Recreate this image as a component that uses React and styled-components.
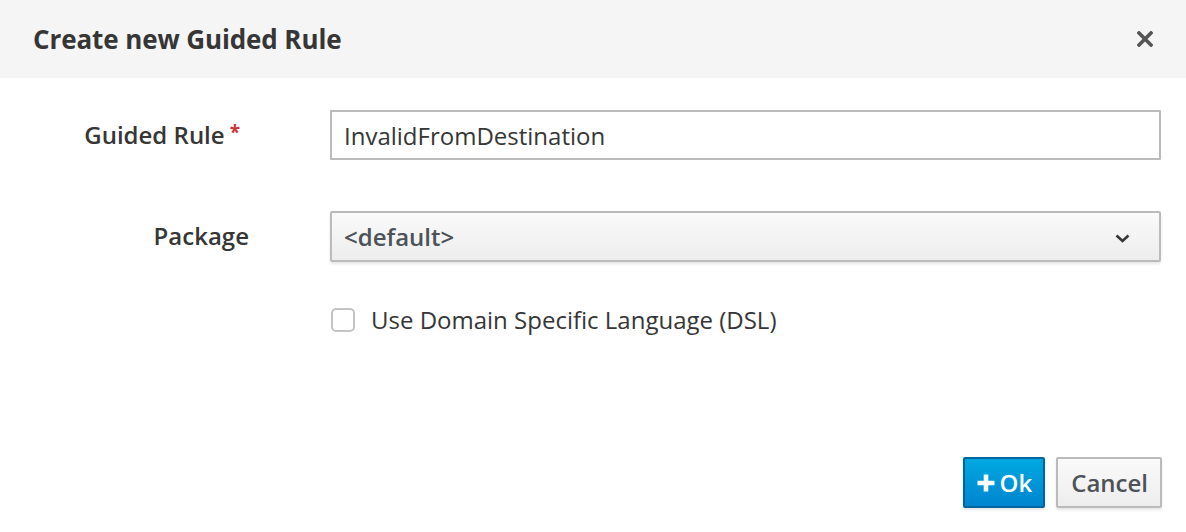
import React, { useState } from 'react'
import styled, { createGlobalStyle } from 'styled-components'

const GlobalStyle = createGlobalStyle`
  html, body {
    margin: 0;
    padding: 0;
    background: #fff;
  }
  body {
    font-family: "Open Sans", "Noto Sans", "Liberation Sans", sans-serif;
    color: #363636;
  }
`

function CloseIcon() {
  return (
    <svg width="16" height="16" viewBox="0 0 16 16">
      <path d="M2 2 L14 14 M14 2 L2 14" stroke="#555" strokeWidth="3.6" strokeLinecap="square" fill="none" />
    </svg>
  )
}

function ChevronDown() {
  return (
    <svg width="15" height="9" viewBox="0 0 15 9">
      <path d="M1.5 1.5 L7.5 7 L13.5 1.5" stroke="#363636" strokeWidth="2.6" fill="none" />
    </svg>
  )
}

function PlusIcon() {
  return (
    <svg width="18" height="18" viewBox="0 0 18 18">
      <path d="M9 0.5 V17.5 M0.5 9 H17.5" stroke="#fff" strokeWidth="4.6" fill="none" />
    </svg>
  )
}

function App() {
  const [ name, setName ] = useState('InvalidFromDestination')
  const [ dsl, setDsl ] = useState(false)

  return (
    <Modal>
      <GlobalStyle />
      <Header>
        <Title>Create new Guided Rule</Title>
        <CloseButton aria-label="Close"><CloseIcon /></CloseButton>
      </Header>
      <Body>
        <Row>
          <Label required>Guided Rule</Label>
          <TextInput value={name} onChange={ e => setName(e.target.value) } />
        </Row>
        <Row gap={51}>
          <Label>Package</Label>
          <Select>
            <span>&lt;default&gt;</span>
            <ChevronDown />
          </Select>
        </Row>
        <CheckRow>
          <Checkbox checked={dsl} onClick={ () => setDsl(!dsl) } />
          <CheckLabel>Use Domain Specific Language (DSL)</CheckLabel>
        </CheckRow>
      </Body>
      <Footer>
        <Button primary><PlusIcon />Ok</Button>
        <Button>Cancel</Button>
      </Footer>
    </Modal>
  )
}

export default App

const Modal = styled.div`
  width: 1186px;
  height: 532px;
  display: flex;
  flex-direction: column;
  background: #fff;
  overflow: hidden;
`
const Header = styled.div`
  height: 78px;
  flex-shrink: 0;
  background: #f5f5f5;
  display: flex;
  align-items: center;
  justify-content: space-between;
  padding: 0 33px;
  box-sizing: border-box;
`
const Title = styled.h4`
  margin: 0;
  font-size: 26px;
  font-weight: 700;
  color: #363636;
  letter-spacing: -0.1px;
`
const CloseButton = styled.button`
  border: 0;
  background: none;
  padding: 0;
  display: flex;
  cursor: pointer;
`
const Body = styled.div`
  padding: 32px 25px 0 0;
  display: flex;
  flex-direction: column;
`
const Row = styled.div`
  display: grid;
  grid-template-columns: 330px 1fr;
  align-items: center;
  margin-top: ${ props => props.gap || 0 }px;
`
const Label = styled.label`
  justify-self: end;
  padding-right: ${ props => props.required ? 90 : 81 }px;
  margin-top: -2px;
  font-size: 24px;
  font-weight: 600;
  color: #363636;

  &::after {
    content: ${ props => props.required ? "'*'" : 'none' };
    color: #c33;
    font-size: 19px;
    font-weight: 700;
    margin-left: 5px;
    vertical-align: 5px;
  }
`
const TextInput = styled.input`
  height: 50px;
  box-sizing: border-box;
  border: 2px solid #bbb;
  border-radius: 1px;
  padding: 0 12px;
  font-family: inherit;
  font-size: 24px;
  color: #363636;
  outline: none;
`
const Select = styled.div`
  height: 51px;
  box-sizing: border-box;
  border: 2px solid #bbb;
  border-radius: 2px;
  background: linear-gradient(#fafafa 0%, #ededed 100%);
  box-shadow: 0 2px 3px rgba(3, 3, 3, 0.1);
  display: flex;
  align-items: center;
  justify-content: space-between;
  padding: 0 29px 0 12px;
  font-size: 24px;
  font-weight: 600;
  color: #4d5258;

  svg {
    margin-top: 4px;
  }
`
const CheckRow = styled.div`
  display: flex;
  align-items: center;
  margin: 41px 0 0 331px;
  gap: 16px;
`
const Checkbox = styled.span`
  width: 24px;
  height: 24px;
  box-sizing: border-box;
  border: 2px solid #c4c4c4;
  border-radius: 5px;
  background: #fff;
  cursor: pointer;
`
const CheckLabel = styled.span`
  font-size: 24px;
  color: #363636;
`
const Footer = styled.div`
  margin-top: auto;
  display: flex;
  justify-content: flex-end;
  gap: 11px;
  padding: 0 24px 24px 0;
`
const Button = styled.button`
  height: 51px;
  box-sizing: border-box;
  display: flex;
  align-items: center;
  gap: 5px;
  padding: ${ props => props.primary ? '0 11px 0 12px' : '0 12px 0 13px' };
  font-family: inherit;
  font-size: 24px;
  font-weight: 600;
  border-radius: 2px;
  border: 2px solid ${ props => props.primary ? '#00659c' : '#bbb' };
  background: ${ props => props.primary
    ? 'linear-gradient(#00a8e1 0%, #0085cf 100%)'
    : 'linear-gradient(#fafafa 0%, #ededed 100%)' };
  color: ${ props => props.primary ? '#fff' : '#4d5258' };
  box-shadow: 0 2px 3px rgba(3, 3, 3, 0.1);
  cursor: pointer;
`
